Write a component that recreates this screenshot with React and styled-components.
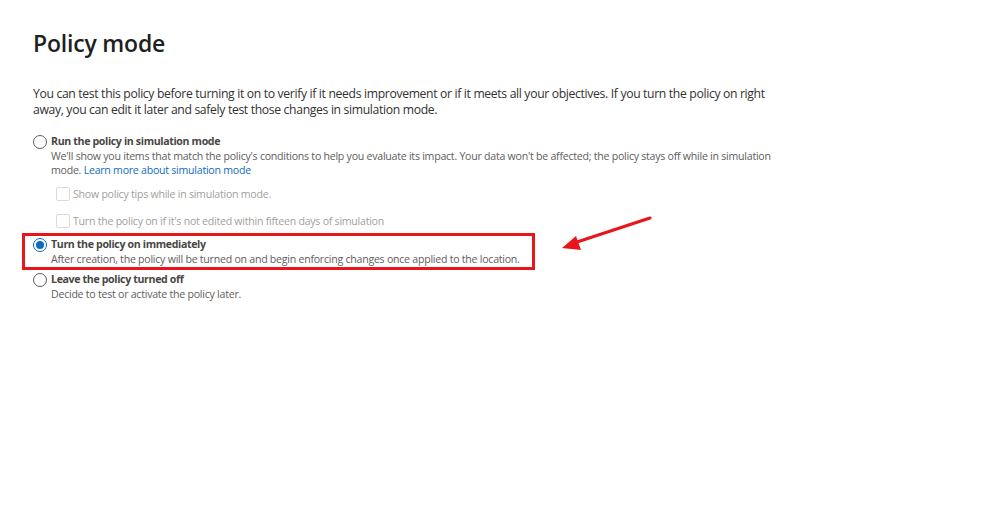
import React from "react";
import styled, { createGlobalStyle } from "styled-components";

const Global = createGlobalStyle`
  html, body { margin: 0; padding: 0; background: #ffffff; }
  body { font-family: "Open Sans", "Noto Sans", sans-serif; color: #323130; }
`;

const Page = styled.div`
  position: relative;
  width: 999px;
  height: 518px;
  box-sizing: border-box;
  padding: 27px 0 0 33px;
  display: flex;
  flex-direction: column;
`;

const Title = styled.h1`
  margin: 0 0 27px 0;
  font-size: 23px;
  line-height: 32px;
  font-weight: 600;
  color: #201f1e;
  letter-spacing: -0.2px;
`;

const Intro = styled.p`
  margin: 0 0 16px 0;
  font-size: 12.2px;
  line-height: 16px;
  color: #323130;
  letter-spacing: -0.34px;
  white-space: nowrap;
`;

const Options = styled.div`
  display: flex;
  flex-direction: column;
`;

const Option = styled.div`
  position: relative;
  display: grid;
  grid-template-columns: 14px 1fr;
  column-gap: 4px;
  margin-top: ${(p) => p.$top || 0}px;

  ${(p) =>
    p.$highlight &&
    `
    &::after {
      content: "";
      position: absolute;
      left: -11px;
      width: 507px;
      top: -4px;
      bottom: -4px;
      border: 3px solid #e8151b;
      pointer-events: none;
    }
  `}
`;

const Radio = styled.span`
  width: 14px;
  height: 14px;
  box-sizing: border-box;
  border-radius: 50%;
  border: 1px solid ${(p) => (p.$checked ? "#0f6cbd" : "#605e5c")};
  margin-top: 1px;
  display: flex;
  align-items: center;
  justify-content: center;
  &::before {
    content: "";
    width: 8px;
    height: 8px;
    border-radius: 50%;
    background: ${(p) => (p.$checked ? "#0f6cbd" : "transparent")};
  }
`;

const Body = styled.div`
  display: flex;
  flex-direction: column;
`;

const Label = styled.div`
  font-size: 10.6px;
  line-height: 15px;
  font-weight: 700;
  color: #484644;
  letter-spacing: -0.35px;
  white-space: nowrap;
`;

const Desc = styled.div`
  font-size: 10.6px;
  line-height: 14px;
  color: #605e5c;
  letter-spacing: -0.25px;
  white-space: nowrap;
`;

const Link = styled.a`
  color: #0f6cbd;
  text-decoration: none;
`;

const SubList = styled.div`
  display: flex;
  flex-direction: column;
  gap: 13px;
  margin: 10px 0 0 23px;
`;

const CheckRow = styled.div`
  display: flex;
  align-items: center;
  gap: 3px;
`;

const CheckBox = styled.span`
  width: 14px;
  height: 14px;
  box-sizing: border-box;
  border: 1px solid #dcdad8;
  border-radius: 2px;
  background: #fff;
`;

const CheckText = styled.span`
  font-size: 10.6px;
  line-height: 14px;
  color: #a19f9d;
  letter-spacing: -0.25px;
  white-space: nowrap;
`;

const Arrow = styled.svg`
  position: absolute;
  left: 556px;
  top: 212px;
  overflow: visible;
`;

export default function App() {
  return (
    <>
      <Global />
      <Page>
        <Title>Policy mode</Title>
        <Intro>
          You can test this policy before turning it on to verify if it needs improvement or if it meets all your objectives. If you turn the policy on right
          <br />
          away, you can edit it later and safely test those changes in simulation mode.
        </Intro>
        <Options>
          <Option>
            <Radio />
            <Body>
              <Label>Run the policy in simulation mode</Label>
              <Desc>
                We'll show you items that match the policy's conditions to help you evaluate its impact. Your data won't be affected; the policy stays off while in simulation
                <br />
                mode. <Link href="#">Learn more about simulation mode</Link>
              </Desc>
            </Body>
          </Option>
          <SubList>
            <CheckRow>
              <CheckBox />
              <CheckText>Show policy tips while in simulation mode.</CheckText>
            </CheckRow>
            <CheckRow>
              <CheckBox />
              <CheckText>Turn the policy on if it's not edited within fifteen days of simulation</CheckText>
            </CheckRow>
          </SubList>
          <Option $highlight $top={9}>
            <Radio $checked />
            <Body>
              <Label>Turn the policy on immediately</Label>
              <Desc>After creation, the policy will be turned on and begin enforcing changes once applied to the location.</Desc>
            </Body>
          </Option>
          <Option $top={6}>
            <Radio />
            <Body>
              <Label>Leave the policy turned off</Label>
              <Desc>Decide to test or activate the policy later.</Desc>
            </Body>
          </Option>
        </Options>
        <Arrow width="100" height="44" viewBox="0 0 100 44">
          <line x1="94" y1="6" x2="18" y2="31" stroke="#e8151b" strokeWidth="3" strokeLinecap="round" />
          <polygon points="6,36 20,24 25,38" fill="#e8151b" />
        </Arrow>
      </Page>
    </>
  );
}
